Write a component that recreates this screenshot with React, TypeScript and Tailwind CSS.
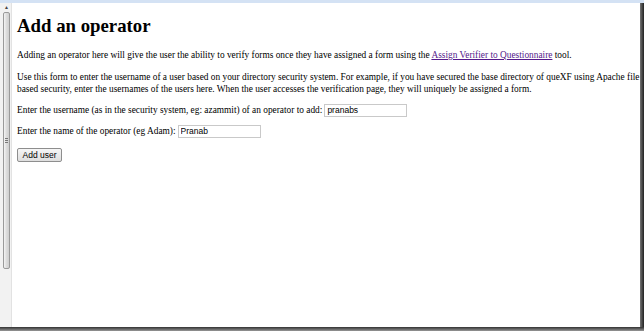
export default function App() {
  return (
    <div className="w-[644px] h-[331px] bg-white flex flex-col overflow-hidden">
      <div className="h-[3px] bg-[#d4e2f4]" />
      <div className="flex-1 flex min-h-0">
        {/* left scrollbar */}
        <div className="w-[12px] flex flex-col pl-[2px] bg-[#f2f2f2] border-r border-[#e2e2e2]">
          <div className="h-[9px] flex items-center justify-center text-[5px] text-[#444] leading-none">▲</div>
          <div className="h-[257px] mx-[1px] rounded-[2px] border border-[#9a9a9a] bg-gradient-to-r from-[#f4f4f4] via-[#dcdcdc] to-[#cfcfcf] flex items-center justify-center">
            <div className="w-[3px] flex flex-col gap-[1px]">
              <div className="h-px bg-[#777]" />
              <div className="h-px bg-[#777]" />
              <div className="h-px bg-[#777]" />
            </div>
          </div>
        </div>
        <div className="flex-1 pl-[5px] pt-[12px] text-[9.35px] leading-[12px] text-black" style={{ fontFamily: '"Liberation Serif", serif' }}>
          <h1 className="text-[18.8px] leading-[22px] font-bold mb-[12px]">Add an operator</h1>
          <p className="mb-[10px]">
            Adding an operator here will give the user the ability to verify forms once they have assigned a form using the{' '}
            <a href="#" className="text-[#551a8b] underline">Assign Verifier to Questionnaire</a> tool.
          </p>
          <p className="mb-[8px]">
            Use this form to enter the username of a user based on your directory security system. For example, if you have secured the base directory of queXF using Apache file based security, enter the usernames of the users here. When the user accesses the verification page, they will uniquely be assigned a form.
          </p>
          <div className="flex items-center gap-[2px] h-[14px] mb-[7px]">
            <span>Enter the username (as in the security system, eg: azammit) of an operator to add:</span>
            <input
              defaultValue="pranabs"
              className="w-[83px] h-[13px] border border-[#c9c9c9] px-[2px] text-[8.5px] outline-none"
              style={{ fontFamily: '"Liberation Sans", sans-serif' }}
            />
          </div>
          <div className="flex items-center gap-[2px] h-[14px] mb-[10px]">
            <span>Enter the name of the operator (eg Adam):</span>
            <input
              defaultValue="Pranab"
              className="w-[83px] h-[13px] border border-[#c9c9c9] px-[2px] text-[8.5px] outline-none"
              style={{ fontFamily: '"Liberation Sans", sans-serif' }}
            />
          </div>
          <button
            className="h-[14px] w-[45px] border border-[#8e8e8e] rounded-[2px] bg-gradient-to-b from-[#f6f6f6] to-[#dedede] text-[8.5px] leading-none"
            style={{ fontFamily: '"Liberation Sans", sans-serif' }}
          >
            Add user
          </button>
        </div>
        <div className="w-[4px] bg-gradient-to-r from-[#777] to-[#222]" />
      </div>
      <div className="h-[4px] bg-gradient-to-b from-[#333] to-[#999]" />
    </div>
  );
}
